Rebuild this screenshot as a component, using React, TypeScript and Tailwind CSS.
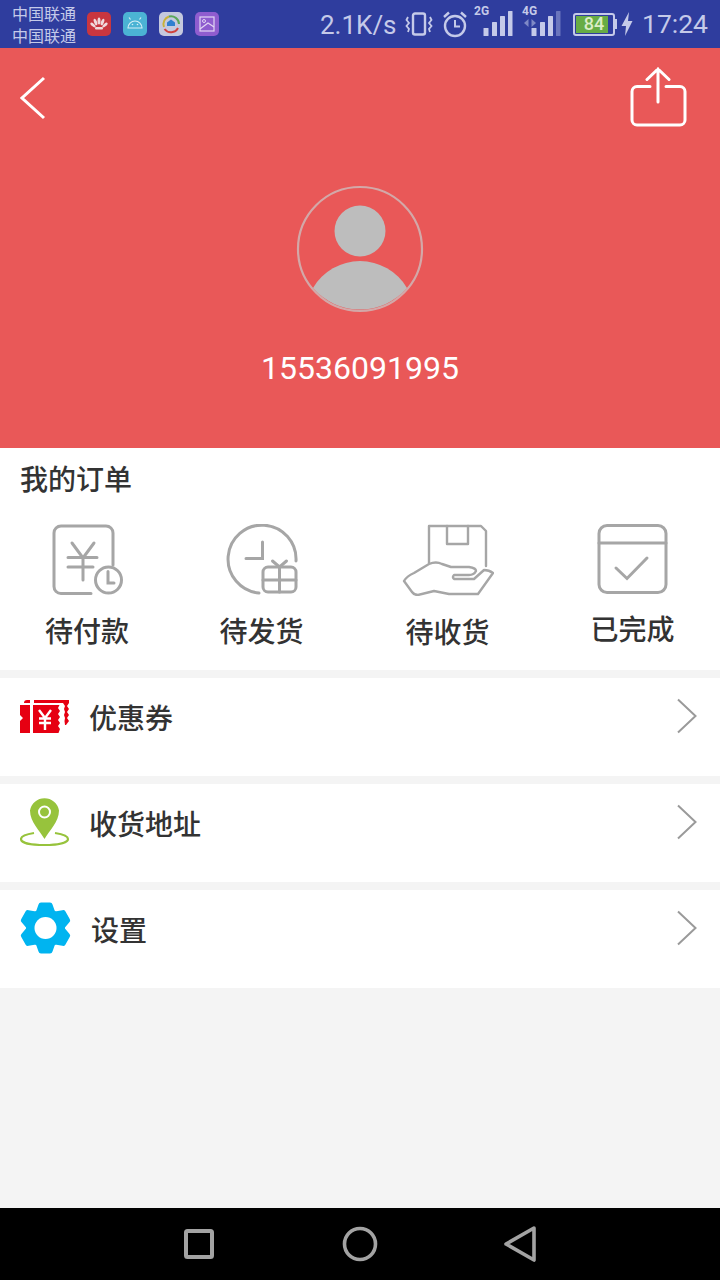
import React from "react";

const FONT = { fontFamily: 'Roboto, "Noto Sans CJK SC", sans-serif' };

function Chevron() {
  return (
    <svg width="20" height="36" viewBox="0 0 20 36" className="ml-auto mt-[20px] shrink-0">
      <path d="M1 1.5 L18.5 18 L1 34.5" fill="none" stroke="#9a9a9a" strokeWidth="2" />
    </svg>
  );
}

function Signal({ last = "#c5cae9" }: { last?: string }) {
  return (
    <svg width="30" height="26" viewBox="0 0 30 26" className="shrink-0">
      <rect x="0.5" y="17" width="5" height="8" rx="0.5" fill="#c5cae9" />
      <rect x="9" y="11" width="5" height="14" rx="0.5" fill="#c5cae9" />
      <rect x="17" y="5" width="5" height="20" rx="0.5" fill="#c5cae9" />
      <rect x="25" y="0" width="4.5" height="25" rx="0.5" fill={last} />
    </svg>
  );
}

function StatusBar() {
  return (
    <div className="flex h-12 items-center bg-[#2f3d9e] text-[#c5cae9]">
      <div className="ml-3 mt-[3px] w-[64px] shrink-0 text-[16px] leading-[22px]">
        <div>中国联通</div>
        <div>中国联通</div>
      </div>
      <div className="ml-[11px] flex gap-3">
        <svg width="24" height="24" viewBox="0 0 24 24">
          <rect width="24" height="24" rx="5" fill="#c9363f" />
          <g fill="#f0d9dc">
            <ellipse cx="12" cy="9" rx="1.5" ry="3.5" />
            <ellipse cx="8.5" cy="10" rx="1.5" ry="3.5" transform="rotate(-20 8.5 10)" />
            <ellipse cx="15.5" cy="10" rx="1.5" ry="3.5" transform="rotate(20 15.5 10)" />
            <ellipse cx="6" cy="13" rx="1.4" ry="3.2" transform="rotate(-50 6 13)" />
            <ellipse cx="18" cy="13" rx="1.4" ry="3.2" transform="rotate(50 18 13)" />
            <rect x="8" y="15" width="8" height="2.5" rx="1" />
          </g>
        </svg>
        <svg width="24" height="24" viewBox="0 0 24 24">
          <rect width="24" height="24" rx="5" fill="#4bb3d4" />
          <path d="M5 16 a7 7 0 0 1 14 0 Z" fill="none" stroke="#d5eef5" strokeWidth="1.2" />
          <path d="M7.5 7.5 L6 5.5 M16.5 7.5 L18 5.5" stroke="#d5eef5" strokeWidth="1.2" />
          <circle cx="9.5" cy="12.5" r="0.8" fill="#d5eef5" />
          <circle cx="14.5" cy="12.5" r="0.8" fill="#d5eef5" />
        </svg>
        <svg width="24" height="24" viewBox="0 0 24 24">
          <rect width="24" height="24" rx="5" fill="#c5c9de" />
          <path d="M5 15 A8 8 0 0 1 10 4.5" fill="none" stroke="#c9b23a" strokeWidth="2" />
          <path d="M10 4.5 A8 8 0 0 1 20 12" fill="none" stroke="#5aa65a" strokeWidth="2" />
          <path d="M5.5 17 A8 8 0 0 0 19 16" fill="none" stroke="#d0443e" strokeWidth="2" />
          <path d="M8 14 V10.5 L12 7.5 L16 10.5 V14 Z" fill="#2f7fd0" />
        </svg>
        <svg width="24" height="24" viewBox="0 0 24 24">
          <rect width="24" height="24" rx="5" fill="#8f5dcf" />
          <rect x="5" y="5" width="14" height="14" fill="none" stroke="#e2d5f3" strokeWidth="1.2" />
          <circle cx="9" cy="9" r="1.5" fill="none" stroke="#e2d5f3" strokeWidth="1" />
          <path d="M5 17 L13 11 L19 15" fill="none" stroke="#e2d5f3" strokeWidth="1.2" />
        </svg>
      </div>
      <div className="ml-[101px] mt-[2px] w-[85px] shrink-0 text-[26px] leading-none">2.1K/s</div>
      <svg width="28" height="24" viewBox="0 0 28 24" className="shrink-0">
        <rect x="8" y="1.5" width="12" height="21" rx="2" fill="none" stroke="#c5cae9" strokeWidth="2.4" />
        <path d="M3 5 L1.5 8 L4 11 L1.5 14 L4 17 L3 20 M25 5 L26.5 8 L24 11 L26.5 14 L24 17 L25 20" fill="none" stroke="#c5cae9" strokeWidth="1.8" />
      </svg>
      <svg width="26" height="28" viewBox="0 0 26 28" className="ml-[9px] shrink-0">
        <circle cx="13" cy="16" r="10" fill="none" stroke="#c5cae9" strokeWidth="2.4" />
        <path d="M13 10 V16.5 H18" fill="none" stroke="#c5cae9" strokeWidth="2" />
        <path d="M2 7 L7 2.5 M24 7 L19 2.5" stroke="#c5cae9" strokeWidth="2.4" />
      </svg>
      <div className="relative ml-[15px] mb-[11px] h-[26px] w-[30px] shrink-0 self-end">
        <span className="absolute left-[-9px] top-[-6px] text-[12px] font-bold leading-none">2G</span>
        <Signal />
      </div>
      <div className="relative ml-[18px] mb-[11px] h-[26px] w-[30px] shrink-0 self-end">
        <span className="absolute left-[-9px] top-[-6px] text-[12px] font-bold leading-none">4G</span>
        <svg width="14" height="8" viewBox="0 0 14 8" className="absolute left-[-8px] top-[8px]">
          <path d="M5.5 0 V8 L1 4 Z M8.5 0 V8 L13 4 Z" fill="#7f89c6" />
        </svg>
        <Signal last="#6a75bd" />
      </div>
      <div className="relative ml-[12px] flex h-[23px] w-[42px] shrink-0 items-center justify-center rounded-[3px] border-2 border-[#c5cae9]">
        <div className="absolute inset-y-[1px] left-[1px] w-[32px] bg-[#67ac45]" />
        <span className="relative text-[18px] font-medium leading-none text-[#dcedc8]">84</span>
      </div>
      <div className="h-[10px] w-[2px] shrink-0 bg-[#c5cae9]" />
      <svg width="12" height="24" viewBox="0 0 12 24" className="ml-[4px] shrink-0">
        <path d="M8 0 L0.5 14 H5 L4 24 L11.5 9 H7 Z" fill="#c5cae9" />
      </svg>
      <div className="ml-[9px] mt-[1px] text-[26.5px] leading-none">17:24</div>
    </div>
  );
}

function Header() {
  return (
    <div className="flex h-[400px] flex-col bg-[#e95858]">
      <div className="flex h-[90px] items-start justify-between pl-5 pr-[32px]">
        <svg width="26" height="44" viewBox="0 0 26 44" className="mt-[28px]">
          <path d="M24 2 L2 22 L24 42" fill="none" stroke="#fff" strokeWidth="3" />
        </svg>
        <svg width="58" height="62" viewBox="0 0 58 62" className="mt-[19px]">
          <path d="M20 19.5 H7 a5 5 0 0 0 -5 5 V53 a5 5 0 0 0 5 5 H50 a5 5 0 0 0 5 -5 V24.5 a5 5 0 0 0 -5 -5 H36" fill="none" stroke="#fff" strokeWidth="3" strokeLinecap="round" />
          <path d="M28 2 V35 M17 12.5 L28 2 L39 12.5" fill="none" stroke="#fff" strokeWidth="3" strokeLinecap="round" />
        </svg>
      </div>
      <div className="flex flex-col items-center">
        <svg width="128" height="128" viewBox="0 0 128 128" className="mt-[47px]">
          <circle cx="64" cy="64" r="62" fill="none" stroke="#d3a8a8" strokeWidth="2.2" />
          <circle cx="64" cy="46" r="25.5" fill="#bdbdbd" />
          <path d="M17 103 A54.5 54.5 0 0 1 111 103 A62 62 0 0 1 17 103 Z" fill="#bdbdbd" />
        </svg>
        <div className="mt-[31px] text-[32px] leading-[48px] text-white">15536091995</div>
      </div>
    </div>
  );
}

function Orders() {
  return (
    <div className="h-[222px] bg-white">
      <div className="pl-5 pt-[13px] text-[28px] font-medium leading-[40px] text-[#333]">我的订单</div>
      <div className="mt-[23px] flex">
        <div className="flex w-[174px] flex-col items-center">
          <svg width="72" height="72" viewBox="0 0 72 72" className="h-[72px] translate-x-px">
            <g fill="none" stroke="#a6a6a6" strokeWidth="3" strokeLinecap="round">
              <path d="M39 69.5 H9 a7 7 0 0 1 -7 -7 V9 a7 7 0 0 1 7 -7 H54 a7 7 0 0 1 7 7 V41" />
              <path d="M20 19 L31 34 L42 19 M16 33.5 H45 M16 43 H41 M31 34 V56" />
              <circle cx="56.5" cy="56" r="13" />
              <path d="M56 47.5 V59 H62" />
            </g>
          </svg>
          <div className="mt-[17px] text-[28px] font-medium leading-[40px] text-[#333]">待付款</div>
        </div>
        <div className="flex w-[175px] flex-col items-center">
          <svg width="72" height="72" viewBox="0 0 72 72" className="h-[72px]">
            <g fill="none" stroke="#a6a6a6" strokeWidth="3" strokeLinecap="round">
              <path d="M70 37 A34 34 0 1 0 33 69" />
              <path d="M36.5 18 V34.5 H20" />
              <rect x="37" y="43" width="33" height="25" rx="5" />
              <path d="M53.5 43 V68 M37 56 H70 M46.5 37 L53.5 43 L60.5 37" />
            </g>
          </svg>
          <div className="mt-[17px] text-[28px] font-medium leading-[40px] text-[#333]">待发货</div>
        </div>
        <div className="flex w-[197px] flex-col items-center">
          <svg width="92" height="72" viewBox="0 0 92 72" className="h-[72px]">
            <g fill="none" stroke="#a6a6a6" strokeWidth="2.4" strokeLinejoin="round" strokeLinecap="round">
              <path d="M27 39 V2 H79 L84 7 V42" />
              <path d="M45 2 V20 H66 V2" />
              <path d="M2 57 Q5 52 12 49 L27 40 Q34 37 40 40 L49 43 H67 Q74 44 74 47 Q72 51 67 51 H52 Q50 53 52 55 H72 L82 46 Q87 46 91 49 L76 70 H47 L32 67 L16 71 Q12 71 10 68 Z" />
            </g>
          </svg>
          <div className="mt-[18px] text-[28px] font-medium leading-[40px] text-[#333]">待收货</div>
        </div>
        <div className="flex w-[173px] flex-col items-center">
          <svg width="72" height="72" viewBox="0 0 72 72" className="h-[72px] -translate-x-px">
            <g fill="none" stroke="#a6a6a6" strokeWidth="3" strokeLinecap="round">
              <rect x="3" y="1.5" width="67" height="67" rx="8" />
              <path d="M3 19 H70" />
              <path d="M20 44 L31 54.5 L51 34" />
            </g>
          </svg>
          <div className="mt-[15px] text-[28px] font-medium leading-[40px] text-[#333]">已完成</div>
        </div>
      </div>
    </div>
  );
}

function Rows() {
  return (
    <div className="flex flex-col gap-2 pt-2">
      <div className="flex h-[98px] bg-white pl-5 pr-[23px]">
        <svg width="50" height="34" viewBox="0 0 50 34" className="mt-[22px] shrink-0">
          <g fill="#e60012">
            <path d="M0 5 H10 V33 H0 V21 L3 18 L0 15 Z" />
            <path d="M4 3 Q4 0 7 0 H10 V3 Z" />
            <path d="M14 0 H49 V3 H14 Z" />
            <path d="M13 5 H39.5 L38 8 L40 11 L38 14 L40 17 L38 20 L40 23 L38 26 L40 29 L38.5 33 H13 Z" />
            <path d="M43 3 H49 L47 6 L49 9 L47 12 L49 15 L47 18 L49 21 L46 25 H45 L44.5 21 L45 18 L44 15 L45 12 L44 9 L45 6 Z" />
          </g>
          <path d="M19 10 L25 18 L31 10 M19 18.5 H31 M19 23 H31 M25 18 V30" fill="none" stroke="#fff" strokeWidth="2.4" />
        </svg>
        <div className="ml-[19px] mt-[22px] text-[28px] font-medium leading-[40px] text-[#333]">优惠券</div>
        <Chevron />
      </div>
      <div className="flex h-[98px] bg-white pl-5 pr-[23px]">
        <svg width="50" height="50" viewBox="0 0 50 50" className="mt-[14px] shrink-0">
          <path d="M14 35 Q1 37 1 41 C1 45 12 47 24.5 47 C37 47 48 45 48 41 Q48 37 35 35" fill="none" stroke="#97c33c" strokeWidth="2.2" />
          <path d="M24.5 41 C20 33 10 24 10 12.5 A14.7 14.7 0 0 1 39 12.5 C39 24 29 33 24.5 41 Z" fill="#97c33c" />
          <circle cx="24.5" cy="14" r="5.5" fill="none" stroke="#fff" strokeWidth="2" />
        </svg>
        <div className="ml-[19px] mt-[22px] text-[28px] font-medium leading-[40px] text-[#333]">收货地址</div>
        <Chevron />
      </div>
      <div className="flex h-[98px] bg-white pl-5 pr-[23px]">
        <svg width="52" height="52" viewBox="0 0 52 52" className="mt-[12px] shrink-0">
          <g fill="#00b4f0">
            <circle cx="25.5" cy="26" r="19.5" />
            {[0, 60, 120, 180, 240, 300].map((a) => (
              <path key={a} d="M15.5 11 L18.5 2.5 Q19 0.5 21 0.5 H30 Q32 0.5 32.5 2.5 L35.5 11 Z" transform={`rotate(${a} 25.5 26)`} />
            ))}
          </g>
          <circle cx="25.5" cy="26" r="11" fill="#fff" />
        </svg>
        <div className="ml-[19px] mt-[22px] text-[28px] font-medium leading-[40px] text-[#333]">设置</div>
        <Chevron />
      </div>
    </div>
  );
}

function NavBar() {
  return (
    <div className="flex h-[72px] items-center justify-center bg-black">
      <div className="flex w-[352px] items-center justify-between">
        <svg width="32" height="32" viewBox="0 0 32 32" className="-translate-x-px">
          <rect x="3" y="3" width="26" height="26" rx="1.5" fill="none" stroke="#a3a3a3" strokeWidth="4" />
        </svg>
        <svg width="36" height="36" viewBox="0 0 36 36" className="translate-x-px">
          <circle cx="18" cy="18" r="15.5" fill="none" stroke="#a3a3a3" strokeWidth="3.6" />
        </svg>
        <svg width="34" height="38" viewBox="0 0 34 38" className="translate-x-px">
          <path d="M31 3 L3 19 L31 35 Z" fill="none" stroke="#a3a3a3" strokeWidth="3.6" strokeLinejoin="round" />
        </svg>
      </div>
    </div>
  );
}

export default function App() {
  return (
    <div className="flex h-[1280px] w-[720px] flex-col overflow-hidden bg-[#f4f4f4]" style={FONT}>
      <StatusBar />
      <Header />
      <Orders />
      <Rows />
      <div className="flex-1" />
      <NavBar />
    </div>
  );
}
